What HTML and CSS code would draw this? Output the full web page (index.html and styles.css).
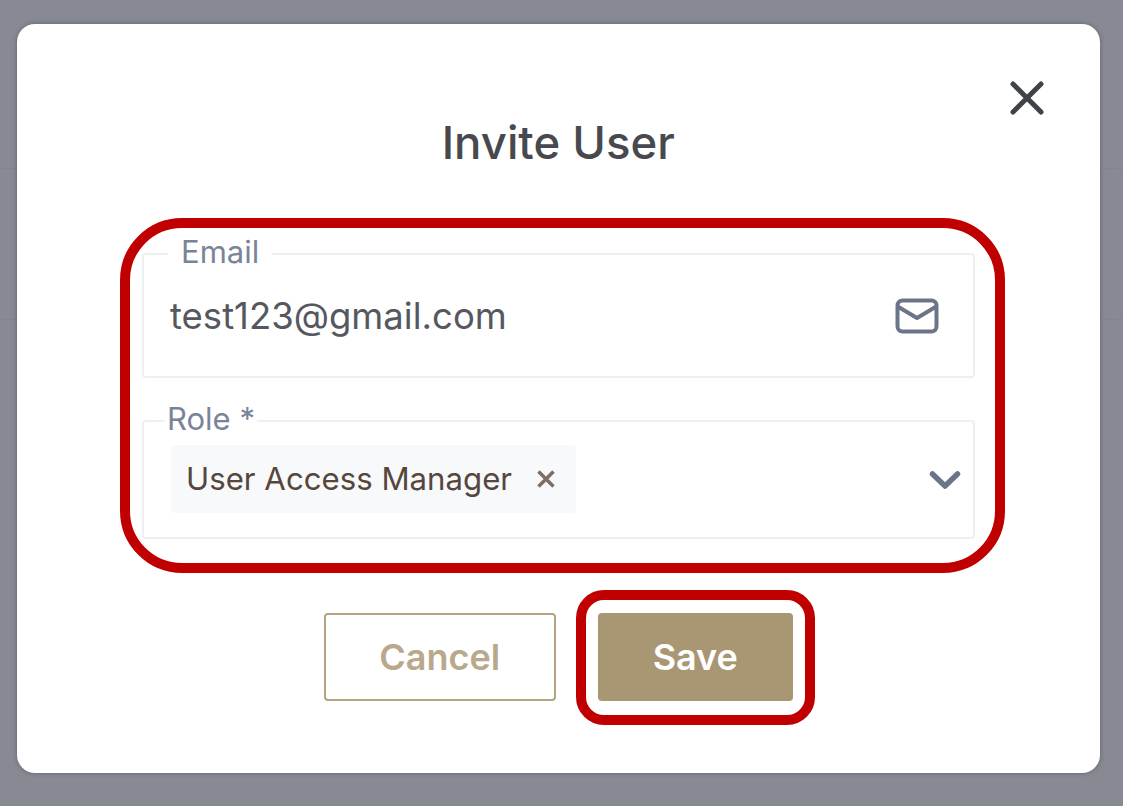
FILE: index.html
```html
<!DOCTYPE html>
<html lang="en">
<head>
    <meta charset="UTF-8">
    <meta name="viewport" content="width=device-width, initial-scale=1.0">
    <title>Invite User</title>
    <link rel="stylesheet" href="styles.css">
</head>
<body>
    <div class="modal">
        <button class="close" aria-label="Close">
            <svg width="34" height="34" viewBox="0 0 34 34" fill="none" stroke="#3f4347" stroke-width="5" stroke-linecap="round">
                <path d="M3 3L31 31M31 3L3 31"/>
            </svg>
        </button>

        <h1 class="title">Invite User</h1>

        <div class="highlight">
            <fieldset class="field field-email">
                <legend class="label label-email">Email</legend>
                <div class="row">
                    <span class="value">test123@gmail.com</span>
                    <svg width="44" height="36" viewBox="0 0 44 36" fill="none" stroke="#6b7588" stroke-width="4" stroke-linecap="round" stroke-linejoin="round">
                        <rect x="2.5" y="2.5" width="39" height="31" rx="5"/>
                        <path d="M3.5 9L22 20L40.5 9"/>
                    </svg>
                </div>
            </fieldset>

            <fieldset class="field field-role">
                <legend class="label label-role">Role *</legend>
                <div class="row row-role">
                    <span class="chip">
                        User Access Manager
                        <svg width="18" height="18" viewBox="0 0 18 18" fill="none" stroke="#7d6d64" stroke-width="3.5">
                            <path d="M1.5 1.5L16.5 16.5M16.5 1.5L1.5 16.5"/>
                        </svg>
                    </span>
                    <svg class="chevron" width="32" height="20" viewBox="0 0 32 20" fill="none" stroke="#6b7588" stroke-width="5.5" stroke-linecap="round" stroke-linejoin="round">
                        <path d="M3.5 4L16 16L28.5 4"/>
                    </svg>
                </div>
            </fieldset>
        </div>

        <div class="actions">
            <button class="btn btn-cancel">Cancel</button>
            <button class="btn btn-save">Save</button>
        </div>
    </div>
</body>
</html>
```

FILE: styles.css
```css
* {
    box-sizing: border-box;
    margin: 0;
    padding: 0;
}

body {
    height: 806px;
    padding: 24px 23px 33px 16.5px;
    overflow: hidden;
    font-family: Inter, "Liberation Sans", sans-serif;
    background-color: #878a93;
    background-image:
        linear-gradient(#83868f, #83868f),
        linear-gradient(#83868f, #83868f);
    background-repeat: no-repeat;
    background-size: 100% 1px;
    background-position: 0 168px, 0 319px;
}

.modal {
    position: relative;
    height: 749px;
    padding: 96px 0 0 103.5px;
    background-color: #fff;
    border-radius: 18px;
    box-shadow: 0 0 4px rgba(60, 60, 70, 0.5);
}

.close {
    position: absolute;
    top: 57px;
    right: 56px;
    display: flex;
    background: none;
    border: 0;
}

.title {
    height: 94px;
    margin-left: -103.5px;
    font-size: 45.5px;
    font-weight: 500;
    line-height: 46px;
    text-align: center;
    color: #47494e;
}

.highlight {
    width: 885px;
    height: 355px;
    margin-top: 4px;
    padding: 8px 20px 0 12px;
    border: 10px solid #c00000;
    border-radius: 62px;
}

.field {
    border: 2px solid #eeeff2;
    border-radius: 4px;
}

.field-email {
    height: 142px;
    padding: 0 34px 0 26px;
}

.field-role {
    height: 136px;
    margin-top: 25px;
    padding: 0 12px 0 26px;
}

.label {
    height: 36px;
    font-size: 31px;
    line-height: 32px;
    color: #7a8499;
}

.label-email {
    margin-left: -2px;
    padding: 0 13px;
}

.label-role {
    margin-left: -5px;
    padding: 0 2px;
}

.row {
    display: flex;
    justify-content: space-between;
    align-items: center;
    height: 52px;
    margin-top: 18px;
}

.value {
    font-size: 36.5px;
    color: #55585e;
}

.row-role {
    height: 68px;
    margin-top: 6px;
}

.chip {
    display: flex;
    align-items: center;
    gap: 25px;
    height: 68px;
    margin-left: 1px;
    padding: 0 21px 0 15px;
    font-size: 31.2px;
    color: #57463c;
    background-color: #f8f9fb;
    border-radius: 4px;
}

.chevron {
    margin-top: 2px;
}

.actions {
    display: flex;
    justify-content: center;
    gap: 42px;
    margin: 40px 0 0 -103.5px;
}

.btn {
    height: 88px;
    font-family: inherit;
    font-size: 36px;
    font-weight: 600;
    border-radius: 4px;
}

.btn-cancel {
    width: 232px;
    color: #b9a98c;
    background-color: #fff;
    border: 2px solid #b5a381;
}

.btn-save {
    position: relative;
    width: 195px;
    color: #fff;
    background-color: #a99673;
    border: 0;
}

.btn-save::after {
    content: "";
    position: absolute;
    inset: -23px -22px -24px;
    border: 10px solid #c00000;
    border-radius: 28px;
}
```
